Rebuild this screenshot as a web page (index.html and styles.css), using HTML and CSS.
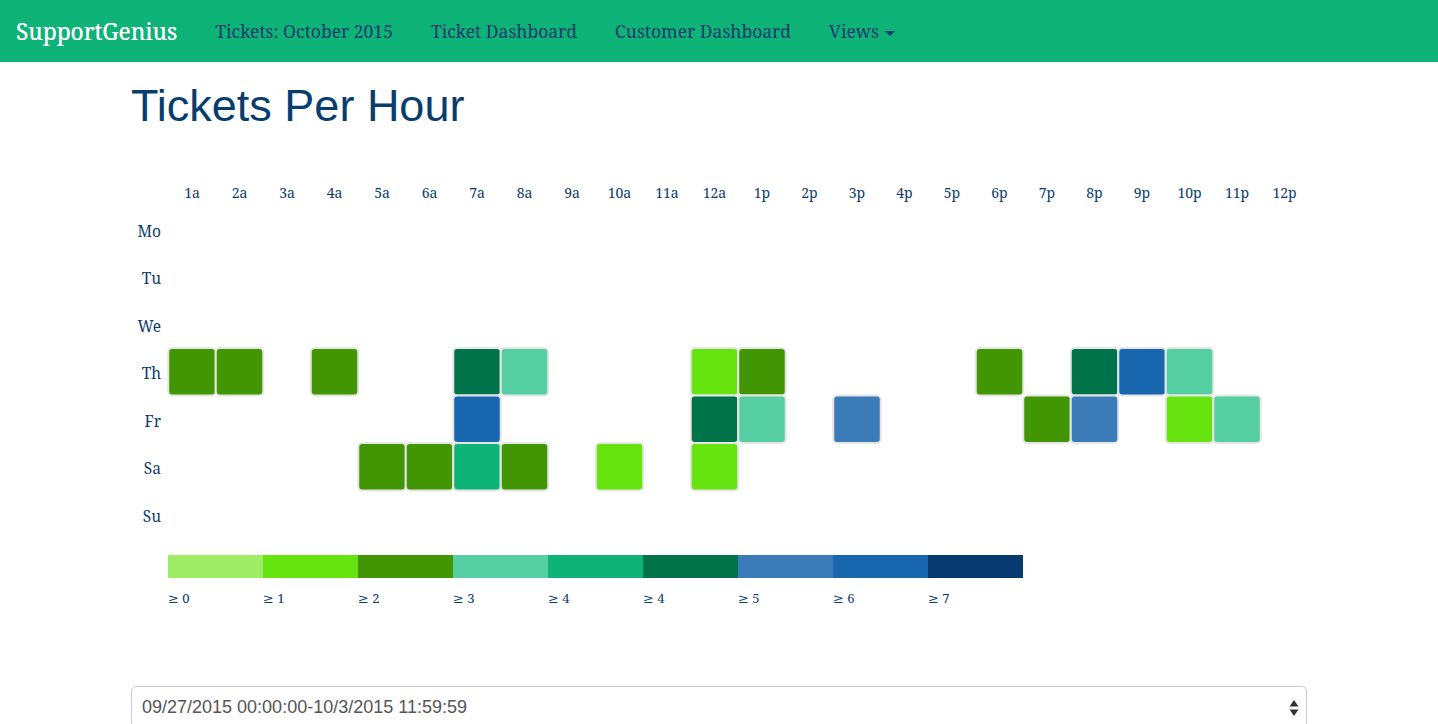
FILE: index.html
```html
<!DOCTYPE html>
<html>
<head>
<meta charset="utf-8">
<title>SupportGenius</title>
<link rel="stylesheet" href="styles.css">
</head>
<body>
<nav class="navbar">
  <a class="brand" href="#">SupportGenius</a>
  <ul class="nav-links">
    <li><a href="#">Tickets: October 2015</a></li>
    <li><a href="#">Ticket Dashboard</a></li>
    <li><a href="#">Customer Dashboard</a></li>
    <li><a href="#">Views <span class="caret"></span></a></li>
  </ul>
</nav>
<main class="container">
  <h1 class="title">Tickets Per Hour</h1>
  <svg class="heatmap" width="1175" height="480" viewBox="0 0 1175 480">
    <g class="hours">
      <text x="61" y="38">1a</text><text x="108.5" y="38">2a</text><text x="156" y="38">3a</text><text x="203.5" y="38">4a</text>
      <text x="251" y="38">5a</text><text x="298.5" y="38">6a</text><text x="346" y="38">7a</text><text x="393.5" y="38">8a</text>
      <text x="441" y="38">9a</text><text x="488.5" y="38">10a</text><text x="536" y="38">11a</text><text x="583.5" y="38">12a</text>
      <text x="631" y="38">1p</text><text x="678.5" y="38">2p</text><text x="726" y="38">3p</text><text x="773.5" y="38">4p</text>
      <text x="821" y="38">5p</text><text x="868.5" y="38">6p</text><text x="916" y="38">7p</text><text x="963.5" y="38">8p</text>
      <text x="1011" y="38">9p</text><text x="1058.5" y="38">10p</text><text x="1106" y="38">11p</text><text x="1153.5" y="38">12p</text>
    </g>
    <g class="days">
      <text x="30" y="76.5">Mo</text>
      <text x="30" y="124">Tu</text>
      <text x="30" y="171.5">We</text>
      <text x="30" y="219">Th</text>
      <text x="30" y="266.5">Fr</text>
      <text x="30" y="314">Sa</text>
      <text x="30" y="361.5">Su</text>
    </g>
    <g class="cells">
      <rect class="c2" x="37.25" y="188" width="47.5" height="47.5" rx="4"/>
      <rect class="c2" x="84.75" y="188" width="47.5" height="47.5" rx="4"/>
      <rect class="c2" x="179.75" y="188" width="47.5" height="47.5" rx="4"/>
      <rect class="c5" x="322.25" y="188" width="47.5" height="47.5" rx="4"/>
      <rect class="c3" x="369.75" y="188" width="47.5" height="47.5" rx="4"/>
      <rect class="c1" x="559.75" y="188" width="47.5" height="47.5" rx="4"/>
      <rect class="c2" x="607.25" y="188" width="47.5" height="47.5" rx="4"/>
      <rect class="c2" x="844.75" y="188" width="47.5" height="47.5" rx="4"/>
      <rect class="c5" x="939.75" y="188" width="47.5" height="47.5" rx="4"/>
      <rect class="c7" x="987.25" y="188" width="47.5" height="47.5" rx="4"/>
      <rect class="c3" x="1034.75" y="188" width="47.5" height="47.5" rx="4"/>

      <rect class="c7" x="322.25" y="235.5" width="47.5" height="47.5" rx="4"/>
      <rect class="c5" x="559.75" y="235.5" width="47.5" height="47.5" rx="4"/>
      <rect class="c3" x="607.25" y="235.5" width="47.5" height="47.5" rx="4"/>
      <rect class="c6" x="702.25" y="235.5" width="47.5" height="47.5" rx="4"/>
      <rect class="c2" x="892.25" y="235.5" width="47.5" height="47.5" rx="4"/>
      <rect class="c6" x="939.75" y="235.5" width="47.5" height="47.5" rx="4"/>
      <rect class="c1" x="1034.75" y="235.5" width="47.5" height="47.5" rx="4"/>
      <rect class="c3" x="1082.25" y="235.5" width="47.5" height="47.5" rx="4"/>

      <rect class="c2" x="227.25" y="283" width="47.5" height="47.5" rx="4"/>
      <rect class="c2" x="274.75" y="283" width="47.5" height="47.5" rx="4"/>
      <rect class="c4" x="322.25" y="283" width="47.5" height="47.5" rx="4"/>
      <rect class="c2" x="369.75" y="283" width="47.5" height="47.5" rx="4"/>
      <rect class="c1" x="464.75" y="283" width="47.5" height="47.5" rx="4"/>
      <rect class="c1" x="559.75" y="283" width="47.5" height="47.5" rx="4"/>
    </g>
    <g class="legend">
      <rect class="c0" x="37" y="395" width="95" height="23"/>
      <rect class="c1" x="132" y="395" width="95" height="23"/>
      <rect class="c2" x="227" y="395" width="95" height="23"/>
      <rect class="c3" x="322" y="395" width="95" height="23"/>
      <rect class="c4" x="417" y="395" width="95" height="23"/>
      <rect class="c5" x="512" y="395" width="95" height="23"/>
      <rect class="c6" x="607" y="395" width="95" height="23"/>
      <rect class="c7" x="702" y="395" width="95" height="23"/>
      <rect class="c8" x="797" y="395" width="95" height="23"/>
      <text x="37" y="443">≥ 0</text>
      <text x="132" y="443">≥ 1</text>
      <text x="227" y="443">≥ 2</text>
      <text x="322" y="443">≥ 3</text>
      <text x="417" y="443">≥ 4</text>
      <text x="512" y="443">≥ 4</text>
      <text x="607" y="443">≥ 5</text>
      <text x="702" y="443">≥ 6</text>
      <text x="797" y="443">≥ 7</text>
    </g>
  </svg>
  <div class="select-wrap">
    <select class="range-select">
      <option>09/27/2015 00:00:00-10/3/2015 11:59:59</option>
    </select>
    <svg class="select-arrows" width="10" height="18" viewBox="0 0 10 18">
      <path d="M5 1 L9.5 7.5 L0.5 7.5 Z" />
      <path d="M5 17 L9.5 10.5 L0.5 10.5 Z" />
    </svg>
  </div>
</main>
</body>
</html>
```

FILE: styles.css
```css
html, body {
  margin: 0;
  padding: 0;
  background: #fff;
}

body {
  font-family: "Noto Serif", "DejaVu Serif", "Liberation Serif", serif;
  color: #0a3c6e;
}

.navbar {
  height: 62px;
  background: #0db377;
  display: flex;
  align-items: center;
  padding-left: 16px;
}

.brand {
  color: #fff;
  text-decoration: none;
  font-size: 22.7px;
  margin-right: 19px;
  text-shadow: 0 0 0.4px #fff;
}

.nav-links {
  list-style: none;
  display: flex;
  margin: 0;
  padding: 0;
}

.nav-links a {
  display: block;
  padding: 0 19px;
  color: #183b6c;
  text-decoration: none;
  font-size: 17.5px;
}

.caret {
  display: inline-block;
  width: 0;
  height: 0;
  border-left: 5px solid transparent;
  border-right: 5px solid transparent;
  border-top: 5px solid #183b6c;
  vertical-align: middle;
  margin-left: 2px;
}

.container {
  width: 1176px;
  margin: 0 auto;
}

.title {
  font-family: "Liberation Sans", Arial, sans-serif;
  font-weight: normal;
  font-size: 45px;
  line-height: 50px;
  margin: 19px 0 0 0;
  color: #083d6f;
}

.heatmap {
  display: block;
  margin-top: 29px;
  overflow: visible;
}

.heatmap text {
  font-family: "Noto Serif", "DejaVu Serif", "Liberation Serif", serif;
  font-size: 14px;
  fill: #0a3c6e;
}

.hours text {
  text-anchor: middle;
}

.days text {
  text-anchor: end;
  font-size: 15.5px;
}

.legend text {
  font-size: 13px;
}

.cells rect {
  stroke: #e6e6e6;
  stroke-width: 2;
}

.c0 { fill: #a0ec67; }
.c1 { fill: #67e410; }
.c2 { fill: #429503; }
.c3 { fill: #55cea1; }
.c4 { fill: #0db377; }
.c5 { fill: #00734a; }
.c6 { fill: #3a7bb8; }
.c7 { fill: #1866ae; }
.c8 { fill: #073a6e; }

.select-wrap {
  position: relative;
  margin-top: 46px;
}

.range-select {
  display: block;
  width: 100%;
  height: 46px;
  -webkit-appearance: none;
  appearance: none;
  border: 1px solid #ccc;
  border-radius: 5px;
  background: #fff;
  padding: 0 10px 4px 10px;
  font-family: "Liberation Sans", Arial, sans-serif;
  font-size: 18px;
  color: #555;
}

.select-arrows {
  position: absolute;
  right: 8px;
  top: 13px;
  fill: #333;
}
```
